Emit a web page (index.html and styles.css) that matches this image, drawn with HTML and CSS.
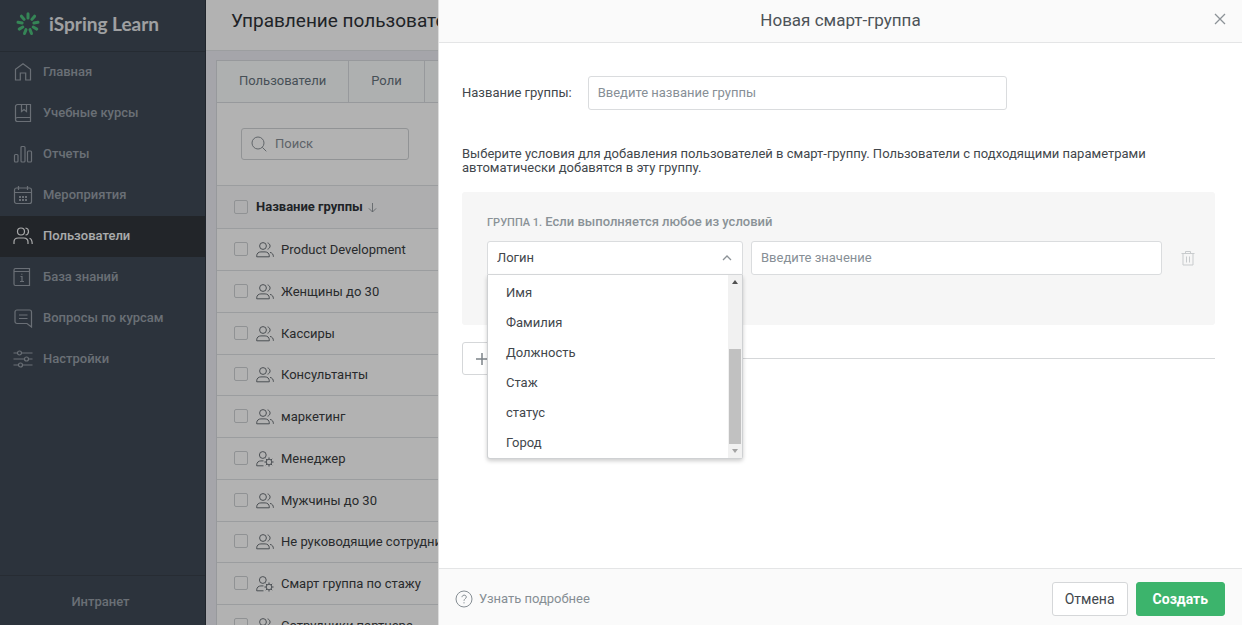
FILE: index.html
```html
<!DOCTYPE html>
<html lang="ru">
<head>
<meta charset="utf-8">
<title>iSpring Learn</title>
<link rel="stylesheet" href="styles.css">
</head>
<body>
<svg class="sprite" aria-hidden="true">
  <symbol id="people" viewBox="0 0 18 16">
    <circle cx="7" cy="4" r="3.4"/><path d="M.7 14.8v-.9c0-2.600 2-4 4.200-4h4.200c2.200 0 4.200 1.400 4.200 4v.9zM11.600.9c3.300 1 3.300 5.200 0 6.300M14 10.400c2.300.5 3.400 2 3.400 4.400"/>
  </symbol>
  <symbol id="smart" viewBox="0 0 18 16">
    <circle cx="6.800" cy="4" r="3.400"/><path d="M7.500 14.800H.7v-.9c0-2.600 2-4 4.200-4h2.600"/>
    <circle cx="13" cy="11" r="2.800"/><path d="M13 6.400v1.800M13 13.800v1.800M8.400 11h1.800M15.800 11h1.800M9.800 7.800l1.200 1.200M15 13l1.200 1.200M16.200 7.800L15 9M11 13l-1.200 1.200"/>
  </symbol>
</svg>

<div class="app">
  <aside class="sidebar">
    <div class="brand">
      <svg class="brand-mark" viewBox="-12 -12 24 24" aria-hidden="true">
        <path d="M0-6V-10.200M3.900-4.600L6.600-7.800M5.900-1L10-1.800M5.200 3L8.800 5.100M2 5.600L3.500 9.500M-2 5.600L-3.500 9.500M-5.200 3L-8.800 5.100M-5.900-1L-10-1.800M-3.900-4.600L-6.600-7.800"/>
      </svg>
      <span>iSpring Learn</span>
    </div>
    <nav class="menu">
      <a class="menu-item" href="#"><svg class="icon" viewBox="0 0 20 20"><path d="M2.500 18V7.300L10 1.700l7.500 5.600V18h-4.800v-7H7.300v7z"/></svg>Главная</a>
      <a class="menu-item" href="#"><svg class="icon" viewBox="0 0 20 20"><path d="M17.500 14.500V1.500H4.500a2 2 0 0 0-2 2v13a2 2 0 0 0 2 2h13v-4h-13a2 2 0 0 0-2 2M8.500 1.500v7l2.500-2 2.500 2v-7"/></svg>Учебные курсы</a>
      <a class="menu-item" href="#"><svg class="icon" viewBox="0 0 20 20"><rect x="1.500" y="10.500" width="3.500" height="7.500" rx="1"/><rect x="8" y="2.500" width="4" height="15.500" rx="1"/><rect x="14.500" y="7" width="4" height="11" rx="1"/></svg>Отчеты</a>
      <a class="menu-item" href="#"><svg class="icon" viewBox="0 0 20 20"><rect x="1.500" y="3" width="17" height="15.500" rx="2"/><path d="M1.500 7.500h17M5.500 1v4M14.500 1v4"/><path class="dots" d="M6 12h8M6 15h8"/></svg>Мероприятия</a>
      <a class="menu-item is-active" href="#"><svg class="icon" viewBox="0 0 20 20"><circle cx="8" cy="5.500" r="3.500"/><path d="M1 18v-2c0-2.600 2-4 4.200-4h5.600c2.200 0 4.200 1.400 4.200 4v2M12.500 2c4 .5 4 6.300 0 7M16.500 12.300c1.800.6 2.700 2 2.700 5.700"/></svg>Пользователи</a>
      <a class="menu-item" href="#"><svg class="icon" viewBox="0 0 20 20"><path d="M1 4.500h15.500v14H2.500a1.500 1.500 0 0 1-1.500-1.500V3a1.500 1.500 0 0 1 1.500-1.500h14v3M7.500 9.500H9v5M7 14.500h4M8.800 6.800v1"/></svg>База знаний</a>
      <a class="menu-item" href="#"><svg class="icon" viewBox="0 0 20 20"><path d="M4 2h12.500a2 2 0 0 1 2 2v15L14 15.500H4a2 2 0 0 1-2-2V4a2 2 0 0 1 2-2zM6 7h8.500M6 10.500h8.500"/></svg>Вопросы по курсам</a>
      <a class="menu-item" href="#"><svg class="icon" viewBox="0 0 20 20"><circle cx="6.500" cy="4" r="2"/><circle cx="13.500" cy="10" r="2"/><circle cx="7.500" cy="16" r="2"/><path d="M.5 4h4M8.500 4h11M.5 10h11M15.500 10h4M.5 16h5M9.500 16h10"/></svg>Настройки</a>
    </nav>
    <a class="intranet" href="#">Интранет</a>
  </aside>

  <main class="main">
    <header class="page-header"><h1>Управление пользователями</h1></header>
    <section class="card">
      <nav class="tabs"><a href="#">Пользователи</a><a href="#">Роли</a></nav>
      <div class="toolbar">
        <label class="search">
          <svg class="search-icon" viewBox="0 0 16 16" aria-hidden="true"><circle cx="7" cy="7" r="6"/><path d="M11.300 11.300l4 4"/></svg>
          <input type="search" placeholder="Поиск" aria-label="Поиск">
        </label>
      </div>
      <table class="groups">
        <thead>
          <tr><th class="check"><input type="checkbox" aria-label="Выбрать все"></th><th class="name" colspan="2">Название группы <svg class="sort" viewBox="0 0 10 12" aria-hidden="true"><path d="M5 1v10M1 7l4 4 4-4"/></svg></th></tr>
        </thead>
        <tbody>
          <tr><td class="check"><input type="checkbox" aria-label="Product Development"></td><td class="kind"><svg><use href="#people"/></svg></td><td>Product Development</td></tr>
          <tr><td class="check"><input type="checkbox" aria-label="Женщины до 30"></td><td class="kind"><svg><use href="#people"/></svg></td><td>Женщины до 30</td></tr>
          <tr><td class="check"><input type="checkbox" aria-label="Кассиры"></td><td class="kind"><svg><use href="#people"/></svg></td><td>Кассиры</td></tr>
          <tr><td class="check"><input type="checkbox" aria-label="Консультанты"></td><td class="kind"><svg><use href="#people"/></svg></td><td>Консультанты</td></tr>
          <tr><td class="check"><input type="checkbox" aria-label="маркетинг"></td><td class="kind"><svg><use href="#people"/></svg></td><td>маркетинг</td></tr>
          <tr><td class="check"><input type="checkbox" aria-label="Менеджер"></td><td class="kind"><svg><use href="#smart"/></svg></td><td>Менеджер</td></tr>
          <tr><td class="check"><input type="checkbox" aria-label="Мужчины до 30"></td><td class="kind"><svg><use href="#people"/></svg></td><td>Мужчины до 30</td></tr>
          <tr><td class="check"><input type="checkbox" aria-label="Не руководящие сотрудники"></td><td class="kind"><svg><use href="#people"/></svg></td><td>Не руководящие сотрудники</td></tr>
          <tr><td class="check"><input type="checkbox" aria-label="Смарт группа по стажу"></td><td class="kind"><svg><use href="#smart"/></svg></td><td>Смарт группа по стажу</td></tr>
          <tr><td class="check"><input type="checkbox" aria-label="Сотрудники партнера"></td><td class="kind"><svg><use href="#people"/></svg></td><td>Сотрудники партнера</td></tr>
        </tbody>
      </table>
    </section>
  </main>
</div>

<div class="backdrop">
  <form class="drawer" role="dialog" aria-labelledby="drawer-title">
    <header class="drawer-header">
      <h2 id="drawer-title">Новая смарт-группа</h2>
      <button class="close" type="button" aria-label="Закрыть"><svg viewBox="0 0 12 12"><path d="M1 1l10 10M11 1L1 11"/></svg></button>
    </header>
    <div class="drawer-body">
      <div class="name-row">
        <label for="group-name">Название группы:</label>
        <input class="field" id="group-name" type="text" placeholder="Введите название группы">
      </div>
      <p class="hint">Выберите условия для добавления пользователей в смарт-группу. Пользователи с подходящими параметрами автоматически добавятся в эту группу.</p>
      <section class="rules">
        <h3><span>ГРУППА 1.</span> Если выполняется любое из условий</h3>
        <div class="rule">
          <div class="picker">
            <select class="field" aria-label="Параметр"><option>Логин</option></select>
            <svg class="chevron" viewBox="0 0 10 6" aria-hidden="true"><path d="M1 5l4-4 4 4"/></svg>
            <div class="dropdown">
              <ul role="listbox" aria-label="Параметр">
                <li role="option">Имя</li>
                <li role="option">Фамилия</li>
                <li role="option">Должность</li>
                <li role="option">Стаж</li>
                <li role="option">статус</li>
                <li role="option">Город</li>
              </ul>
              <div class="scrollbar" aria-hidden="true"><i class="up"></i><i class="thumb"></i><i class="down"></i></div>
            </div>
          </div>
          <input class="field value" type="text" placeholder="Введите значение" aria-label="Значение">
          <button class="trash" type="button" aria-label="Удалить условие"><svg viewBox="0 0 14 16"><path d="M.5 3.500h13M4.500 3.500v-2h5v2M2 3.500v11.500h10V3.500M5.500 6.500v6M8.500 6.500v6"/></svg></button>
        </div>
      </section>
      <div class="add-row">
        <button class="add" type="button" aria-label="Добавить группу"><svg viewBox="0 0 12 12"><path d="M6 0v12M0 6h12"/></svg></button>
        <span class="rule-line"></span>
      </div>
    </div>
    <footer class="drawer-footer">
      <a class="help" href="#"><svg viewBox="0 0 18 18" aria-hidden="true"><circle cx="9" cy="9" r="8"/><path d="M7 7.200c0-2.800 4.300-2.700 4.300-.2C11.300 8.700 9 8.700 9 10.800M9 12.200v1.200"/></svg>Узнать подробнее</a>
      <button class="btn" type="button">Отмена</button>
      <button class="btn primary" type="submit">Создать</button>
    </footer>
  </form>
</div>
</body>
</html>
```
FILE: styles.css
```css
* { box-sizing: border-box; }
body, h1, h2, h3, p, ul { margin: 0; padding: 0; }
body {
  height: 100vh;
  overflow: hidden;
  font: 13px/16px Roboto, "Liberation Sans", sans-serif;
  color: #42474c;
}
button, input, select { font: inherit; color: inherit; }
a { color: inherit; text-decoration: none; }
ul { list-style: none; }
svg { fill: none; stroke: currentColor; flex: none; }
.sprite { position: absolute; width: 0; height: 0; }

.app { display: flex; height: 100vh; overflow: hidden; }

.sidebar {
  display: flex;
  flex-direction: column;
  flex: none;
  width: 206px;
  background: #404a56;
  border-right: 1px solid #2f3640;
  color: #98a0a9;
  font-weight: 500;
}
.brand {
  display: flex;
  align-items: center;
  gap: 9px;
  height: 52px;
  padding: 0 0 3px 16px;
  border-bottom: 1px solid #363e48;
  font: 700 19px/24px Lato, sans-serif;
  color: #e4e6e9;
}
.brand-mark { width: 24px; height: 24px; stroke: #4cbf7c; stroke-width: 3; stroke-linecap: round; }
.menu { flex: 1; }
.menu-item { display: flex; align-items: center; gap: 10px; height: 41px; padding: 0 0 1px 13px; }
.menu-item.is-active { background: #31353b; color: #f4f5f6; }
.icon { width: 20px; height: 20px; stroke-width: 1.2; }
.dots { stroke-dasharray: 2 1; stroke-width: 2; }
.intranet { padding: 18px 4px 15px 0; border-top: 1px solid #394049; text-align: center; }

.main { flex: 1; min-width: 0; background: #ecedf4; }
.page-header { height: 51px; padding: 9px 0 0 25px; background: #fff; border-bottom: 1px solid #e0e2e6; }
h1 { font-size: 19px; line-height: 24px; font-weight: 400; color: #2f3338; }
.card { margin: 9px 10px 0; background: #fff; border: 1px solid #d9dce0; }
.tabs { display: flex; background: #fafcfc; border-bottom: 1px solid #d9dce0; color: #66737c; }
.tabs a { padding: 12px 22px 13px; border-right: 1px solid #d9dce0; }
.toolbar { padding: 25px 24px; }
.search {
  display: flex;
  align-items: center;
  gap: 8px;
  width: 168px;
  height: 32px;
  padding: 0 9px;
  border: 1px solid #d0d3d6;
  border-radius: 3px;
}
.search-icon { width: 16px; height: 16px; color: #8c9399; }
.search input { min-width: 0; padding: 0; border: 0; outline: 0; background: none; }
::placeholder { color: #878f96; opacity: 1; }
.groups { width: 100%; border-collapse: collapse; color: #3a3d41; }
.groups th, .groups td { height: 42px; padding: 0; border-top: 1px solid #dfe1e4; text-align: left; vertical-align: middle; }
.groups tbody tr:nth-child(4n) td { height: 41px; }
.groups th { height: 43px; background: #f9fafb; font-weight: 700; color: #2f3338; }
.groups .check { width: 39px; padding-left: 17px; }
.groups td.check { padding-bottom: 2px; }
.groups .kind { width: 25px; }
.groups .kind svg { display: block; width: 18px; height: 16px; color: #6c7278; }
.sort { width: 9px; height: 11px; margin-left: 2px; vertical-align: -2px; color: #8c9399; }
input[type="checkbox"] {
  display: block;
  width: 14px;
  height: 14px;
  margin: 0;
  appearance: none;
  border: 1px solid #ced1d4;
  border-radius: 2px;
}

.backdrop { position: fixed; inset: 0; display: flex; padding-left: 438px; background: rgba(0, 0, 0, 0.3); }
.drawer { display: flex; flex-direction: column; flex: 1; min-width: 0; background: #fff; border-left: 1px solid #ddd; }
.drawer-header { position: relative; padding: 8px 0 10px; background: #fafafa; border-bottom: 1px solid #e4e5e6; text-align: center; }
h2 { font-size: 17px; line-height: 24px; font-weight: 400; color: #4d5358; }
.close { position: absolute; top: 8px; right: 11px; width: 22px; height: 22px; padding: 5px; border: 0; background: none; color: #8c9297; }
.close svg { display: block; width: 12px; height: 12px; stroke-width: 1.3; }
.drawer-body { flex: 1; padding: 33px 27px 0 23px; }
.name-row { display: flex; align-items: center; gap: 16px; }
.field {
  height: 34px;
  padding: 0 9px 1px;
  border: 1px solid #dadcde;
  border-radius: 3px;
  background: #fff;
  outline: 0;
}
.name-row .field { width: 419px; }
.hint { margin-top: 37px; line-height: 14px; }
.rules { margin-top: 17px; padding: 22px 0 50px 25px; background: #f6f6f6; border-radius: 3px; }
h3 { margin-bottom: 10px; font-size: 13px; line-height: 16px; font-weight: 500; color: #8a9297; }
h3 span { font-size: 11px; }
.rule { display: flex; align-items: center; }
.picker { position: relative; flex: none; width: 256px; margin-right: 8px; }
.picker select { display: block; width: 100%; appearance: none; border-radius: 3px 3px 0 0; }
.chevron { position: absolute; top: 14px; right: 11px; width: 10px; height: 6px; color: #8c9297; stroke-width: 1.3; }
.dropdown {
  position: absolute;
  top: 34px;
  left: 0;
  right: 0;
  display: flex;
  justify-content: space-between;
  height: 184px;
  padding-left: 18px;
  background: #fff;
  border: solid #cfd1d3;
  border-width: 0 1px 1px;
  border-radius: 0 0 3px 3px;
  box-shadow: 0 2px 4px rgba(0, 0, 0, 0.2);
}
.dropdown li { padding: 7px 0; }
.dropdown ul { padding-top: 3px; }
.scrollbar { display: flex; flex-direction: column; align-items: center; justify-content: space-between; width: 14px; padding: 5px 0; background: #f1f1f1; }
.up, .down { border: solid transparent; border-width: 0 3px 4px; border-bottom-color: #505050; }
.down { border-width: 4px 3px 0; border-top-color: #a3a3a3; }
.thumb { width: 12px; height: 95px; margin: auto 0 5px; background: #c1c1c1; }
.value { flex: 1; min-width: 0; }
.trash { width: 53px; height: 34px; padding: 0 19px; border: 0; background: none; color: #c8cbcd; }
.trash svg { display: block; width: 14px; height: 16px; }
.add-row { display: flex; align-items: center; margin-top: 17px; }
.add { width: 40px; height: 33px; padding: 0 13px; border: 1px solid #d5d7d9; border-radius: 3px; background: #fff; color: #7c8388; }
.add svg { display: block; width: 12px; height: 12px; stroke-width: 1.5; }
.rule-line { flex: 1; height: 1px; background: #d5d7d9; }
.drawer-footer { display: flex; align-items: center; gap: 8px; padding: 13px 17px 9px 16px; background: #fafafa; border-top: 1px solid #e4e5e6; }
.help { display: flex; align-items: center; gap: 6px; margin-right: auto; color: #868e94; }
.help svg { width: 18px; height: 18px; }
.btn { height: 34px; padding: 0 12px; border: 1px solid #d5d7d9; border-radius: 3px; background: #fff; font-size: 14px; }
.btn.primary { padding: 0 16px; border-color: #3cb46c; background: #3cb46c; color: #fff; font-weight: 700; }
```
